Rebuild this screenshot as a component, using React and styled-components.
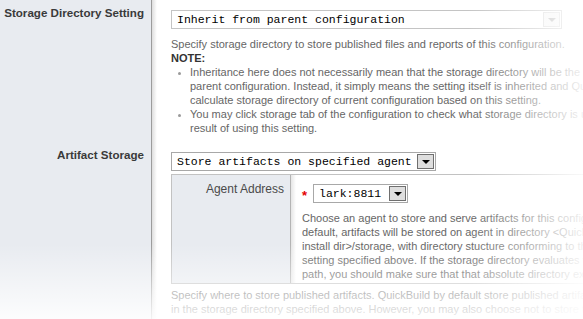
import React from "react";
import styled, { createGlobalStyle } from "styled-components";

const GlobalStyle = createGlobalStyle`
  body {
    margin: 0;
    background: #fff;
    font-family: "Liberation Sans", Arial, sans-serif;
  }
`;

const Page = styled.main`
  position: relative;
  width: 583px;
  height: 319px;
  overflow: hidden;
  display: grid;
  grid-template-columns: 152px 1fr;
  grid-template-rows: auto 1fr;
`;

const Label = styled.div`
  background: #e8ebf0;
  border-right: 1px solid #9c9c9c;
  padding: 6px 7px 0 0;
  text-align: right;
  font-size: 11.6px;
  font-weight: bold;
  line-height: 14px;
  color: #3a3a3a;
  white-space: nowrap;
`;

const Field = styled.div`
  padding: 10px 0 ${(p) => p.$bottom || 0}px 19px;
  background: linear-gradient(to right, rgba(0, 0, 0, 0.13), rgba(0, 0, 0, 0) 5px);
  min-width: 0;
`;

const Select = styled.div`
  display: flex;
  align-items: center;
  justify-content: space-between;
  box-sizing: border-box;
  width: ${(p) => p.$width}px;
  height: 19px;
  padding: 0 1px 0 5px;
  border: 1px solid ${(p) => (p.$disabled ? "#c4c4c4" : "#a8a8a8")};
  background: #fff;
  font-family: "Liberation Mono", "Courier New", monospace;
  font-size: 11.5px;
  color: #000;
  white-space: nowrap;
`;

const ArrowButton = styled.span`
  display: flex;
  align-items: center;
  justify-content: center;
  box-sizing: border-box;
  flex-shrink: 0;
  width: 17px;
  height: 15px;
  border: 1px solid ${(p) => (p.$disabled ? "#d6d6d6" : "#6f6f6f")};
  background: ${(p) => (p.$disabled ? "#f4f4f4" : "#dedede")};
`;

const Triangle = styled.span`
  width: 0;
  height: 0;
  border-left: 4px solid transparent;
  border-right: 4px solid transparent;
  border-top: 4px solid ${(p) => (p.$disabled ? "#a9a9a9" : "#000")};
`;

const Text = styled.div`
  font-size: 11px;
  line-height: 14px;
  color: #666;
  white-space: nowrap;
  margin-top: ${(p) => p.$top || 0}px;
`;

const Note = styled.div`
  font-size: 11px;
  line-height: 14px;
  font-weight: bold;
  color: #333;
`;

const Bullets = styled.ul`
  margin: 0;
  padding-left: 19px;
  font-size: 11px;
  line-height: 14px;
  color: #666;
  white-space: nowrap;

  & li::marker {
    color: #9a9a9a;
    font-size: 9px;
  }
`;

const SubTable = styled.div`
  display: grid;
  grid-template-columns: 119px 1fr;
  width: 460px;
  height: 110px;
  box-sizing: border-box;
  margin-top: 3px;
  border: 1px solid #c2c2c2;
`;

const SubLabel = styled.div`
  background: #e8ebf0;
  border-right: 1px solid #b4b4b4;
  padding: 7px 6px 0 0;
  text-align: right;
  font-size: 12px;
  line-height: 14px;
  color: #4a4a4a;
`;

const SubField = styled.div`
  padding: 7px 0 0 11px;
  background: linear-gradient(to right, rgba(0, 0, 0, 0.1), rgba(0, 0, 0, 0) 5px);
`;

const FieldRow = styled.div`
  display: flex;
  align-items: center;
  gap: 4px;
`;

const Required = styled.span`
  color: #e40000;
  font-size: 13px;
  font-weight: bold;
  line-height: 19px;
  padding-top: 4px;
  width: 7px;
`;

const FadeRight = styled.div`
  position: absolute;
  top: 0;
  right: 0;
  bottom: 0;
  width: 115px;
  pointer-events: none;
  background: linear-gradient(to right, rgba(255, 255, 255, 0), rgba(255, 255, 255, 0.9));
`;

const FadeBottom = styled.div`
  position: absolute;
  left: 0;
  right: 0;
  bottom: 0;
  height: 75px;
  pointer-events: none;
  background: linear-gradient(to bottom, rgba(255, 255, 255, 0), rgba(255, 255, 255, 0.88));
`;

function Dropdown({ width, disabled, children }) {
  return (
    <Select $width={width} $disabled={disabled}>
      <span>{children}</span>
      <ArrowButton $disabled={disabled}>
        <Triangle $disabled={disabled} />
      </ArrowButton>
    </Select>
  );
}

export default function App() {
  return (
    <Page>
      <GlobalStyle />
      <Label>Storage Directory Setting</Label>
      <Field $bottom={7}>
        <Dropdown width={391} disabled>
          Inherit from parent configuration
        </Dropdown>
        <Text $top={8}>
          Specify storage directory to store published files and reports of this configuration.
        </Text>
        <Note>NOTE:</Note>
        <Bullets>
          <li>
            Inheritance here does not necessarily mean that the storage directory will be the same as
            <br />
            parent configuration. Instead, it simply means the setting itself is inherited and QuickBuild will
            <br />
            calculate storage directory of current configuration based on this setting.
          </li>
          <li>
            You may click storage tab of the configuration to check what storage directory is used as the
            <br />
            result of using this setting.
          </li>
        </Bullets>
      </Field>

      <Label>Artifact Storage</Label>
      <Field>
        <Dropdown width={265}>Store artifacts on specified agent</Dropdown>
        <SubTable>
          <SubLabel>Agent Address</SubLabel>
          <SubField>
            <FieldRow>
              <Required>*</Required>
              <Dropdown width={95}>lark:8811</Dropdown>
            </FieldRow>
            <Text $top={6}>
              Choose an agent to store and serve artifacts for this configuration. By
              <br />
              default, artifacts will be stored on agent in directory &lt;QuickBuild agent
              <br />
              install dir&gt;/storage, with directory stucture conforming to the storage
              <br />
              setting specified above. If the storage directory evaluates to an absolute
              <br />
              path, you should make sure that that absolute directory exists on the agent.
            </Text>
          </SubField>
        </SubTable>
        <Text $top={4}>
          Specify where to store published artifacts. QuickBuild by default store published artifacts on server
          <br />
          in the storage directory specified above. However, you may also choose not to store them on server.
        </Text>
      </Field>

      <FadeRight />
      <FadeBottom />
    </Page>
  );
}
